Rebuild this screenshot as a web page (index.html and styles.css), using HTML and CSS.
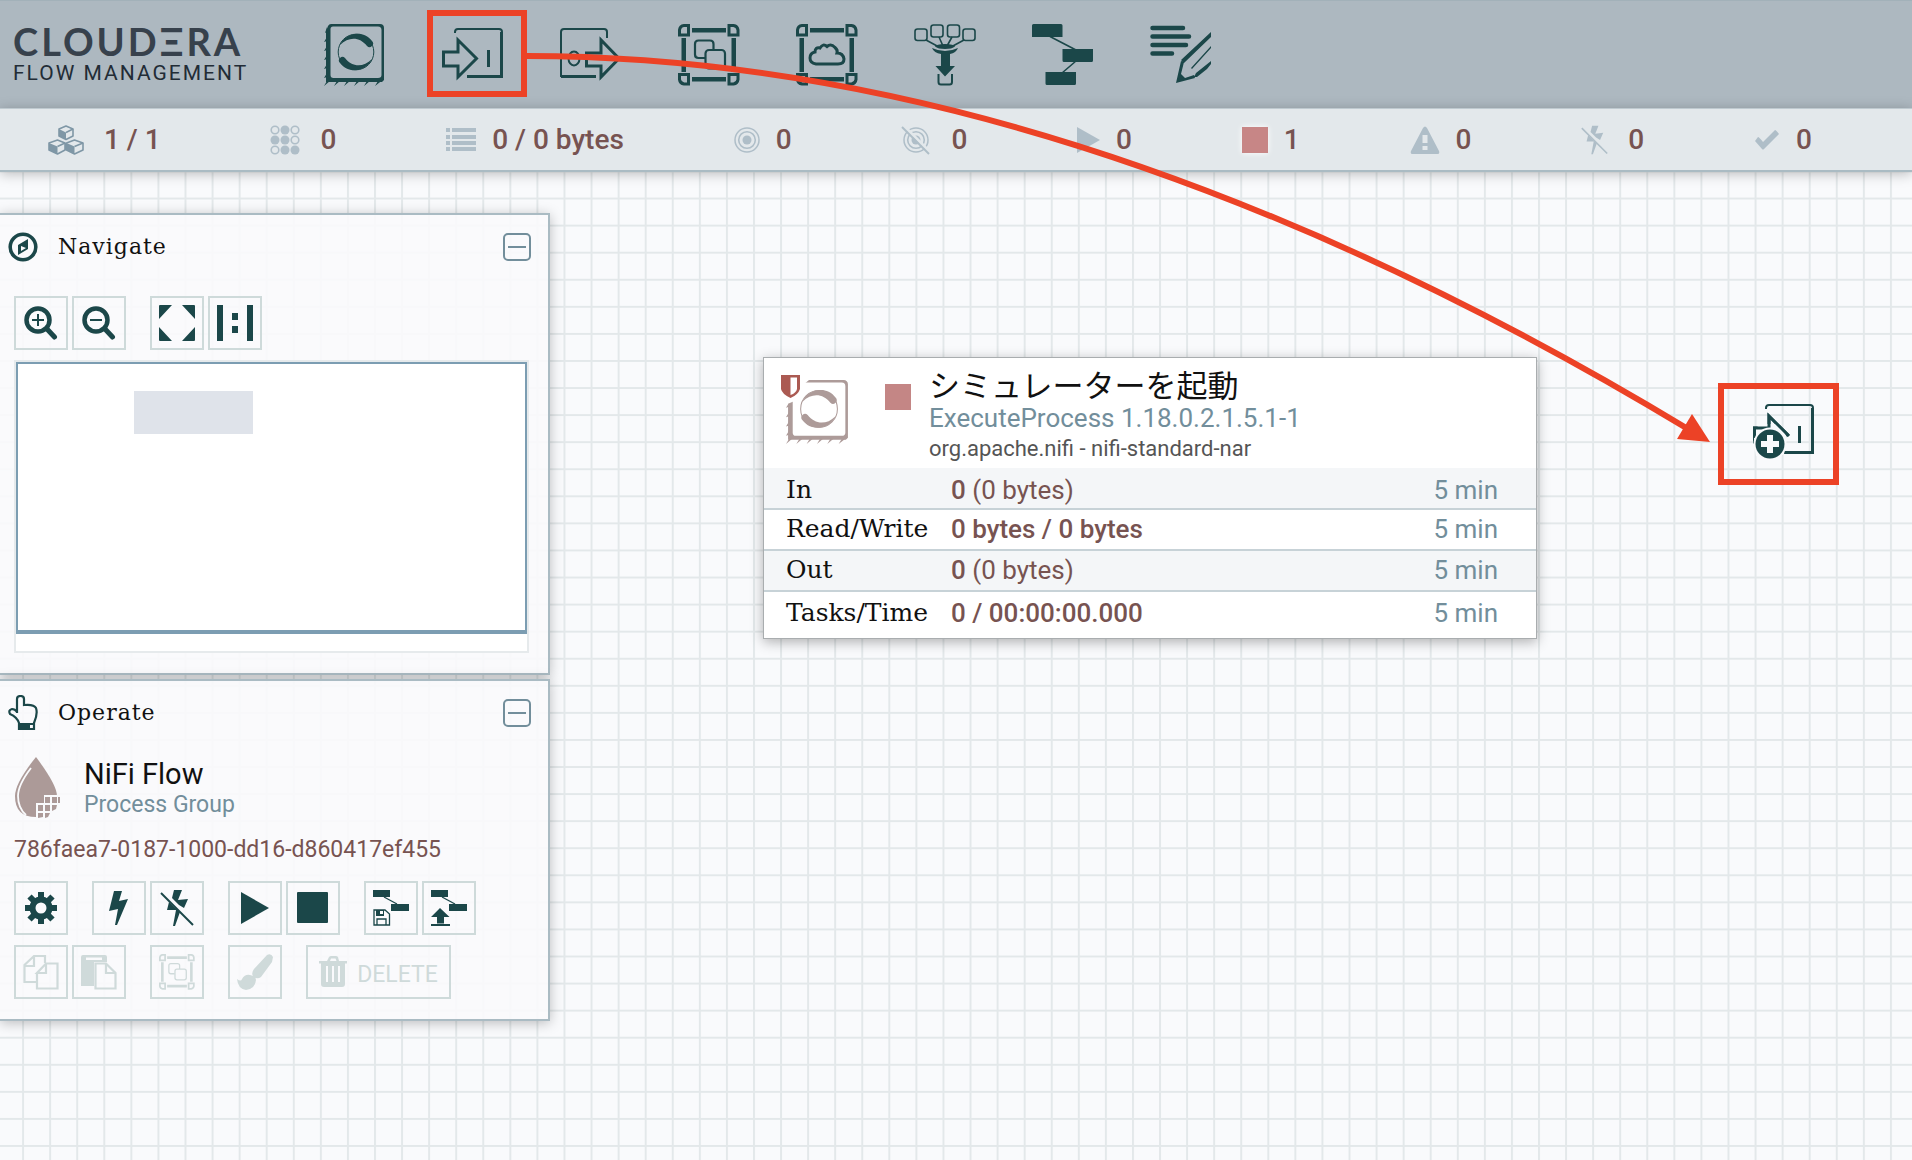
FILE: index.html
```html
<!DOCTYPE html>
<html lang="en">
<head>
<meta charset="utf-8">
<meta name="viewport" content="width=device-width, initial-scale=1">
<title>NiFi Flow</title>
<link rel="stylesheet" href="styles.css">
</head>
<body>
<svg class="defs" aria-hidden="true">
  <symbol id="swirl" viewBox="0 0 40 40">
    <circle cx="20" cy="20" r="17.8" fill="none" stroke="currentColor" stroke-width="1"/>
    <path fill="currentColor" d="M4 13C9 1 27-3 36 9a3.400 3.400 0 0 1-5 5C24 5 13 4 4 13Z"/>
    <path fill="currentColor" d="M36 27C31 39 13 43 4 31a3.400 3.400 0 0 1 5-5C16 35 27 36 36 27Z"/>
  </symbol>
  <symbol id="processor" viewBox="0 0 62 62">
    <path fill="currentColor" fill-rule="evenodd" d="M7 0H56a4 4 0 0 1 4 4V56l-2 2H2V7L4 2Q5 0 7 0ZM9 2.500Q6.500 2.500 6.500 5V51q0 3 3 3H54q3.500 0 3.500-3V6q0-3.500-3.500-3.500Z"/>
    <path fill="currentColor" d="M3 3l-2 6 2-1ZM3 13l-3 5 3-1ZM3 22l-3 5 3-1ZM3 31l-3 5 3-1ZM3 40l-3 5 3-1ZM3 49l-3 5 3-1ZM3 57l-3 5 6-5ZM13 57l-3 5 6-5ZM23 57l-3 5 6-5ZM33 57l-3 5 6-5ZM43 57l-3 5 6-5ZM54 57l-3 5 9-7Z"/>
    <use href="#swirl" x="12" y="8" width="40" height="40"/>
  </symbol>
  <symbol id="port-in" viewBox="0 0 62 62">
    <g fill="none" stroke="currentColor" stroke-width="3">
      <path stroke-width="2" d="M13 9V8Q13 5 16 5H57Q60 5 60 8V10"/>
      <path d="M59.500 8V52.500H25"/>
      <path d="M1.500 28H16V16L34.500 34.500 16 53V42H1.500Z"/>
      <path d="M46.500 26V43"/>
    </g>
  </symbol>
  <symbol id="port-out" viewBox="0 0 62 62">
    <g fill="none" stroke="currentColor" stroke-width="2">
      <path d="M36 52H1V8Q1 5 4 5H44Q47 5 47 8V14"/>
      <path stroke-width="3" d="M36 52.500H1"/>
      <path stroke-width="3" d="M26.500 29H41V16L59 34.500 41 53V42H26.500Z"/>
      <ellipse cx="14" cy="34.500" rx="5.500" ry="7"/>
    </g>
  </symbol>
  <symbol id="frame" viewBox="0 0 62 62">
    <path fill="currentColor" d="M14 4H48V8.500H14ZM14 53H48V57.500H14ZM3.500 14H8V48H3.500ZM53.500 14H58V48H53.500Z"/>
    <path fill="none" stroke="currentColor" stroke-width="3" d="M10.500 1.500V11H1.500V6Q2 2 6 1.500ZM51 1.500V11H60V6Q59.500 2 55.500 1.500ZM10.500 60V50.500H1.500V55.500Q2 59.500 6 60ZM51 60V50.500H60V55.500Q59.500 59.500 55.500 60Z"/>
  </symbol>
  <symbol id="group" viewBox="0 0 62 62">
    <use href="#frame" width="62" height="62"/>
    <g fill="none" stroke="currentColor" stroke-width="2.200">
      <path d="M27 34H20.500Q17 34 17 30.500V20Q17 16.500 20.500 16.500H32Q35.500 16.500 35.500 20V26"/>
      <rect x="27.500" y="26" width="19.500" height="18.500" rx="3.500"/>
    </g>
  </symbol>
  <symbol id="blocks" viewBox="0 0 62 62">
    <path fill="currentColor" d="M0 1.500Q0 0 1.500 0H29Q30.500 0 30.500 1.500V13H0ZM30.500 25H61V36.500Q61 38 59.500 38H32Q30.500 38 30.500 36.500ZM13.500 48H44V59.500Q44 61 42.500 61H15Q13.500 61 13.500 59.500Z"/>
    <path stroke="currentColor" stroke-width="1.600" d="M18 12.500 44 26M44 37 30 49"/>
  </symbol>
  <symbol id="target" viewBox="0 0 26 28">
    <circle cx="13" cy="14" r="12" fill="none" stroke="currentColor" stroke-width="1.500"/>
    <circle cx="13" cy="14" r="8.300" fill="none" stroke="currentColor" stroke-width="1.600"/>
    <circle cx="13" cy="14" r="4.500" fill="currentColor"/>
  </symbol>
  <symbol id="bolt-off" viewBox="0 0 34 36">
    <path fill="currentColor" d="M14 0H22L18 10 28 9 24 18 19 15 12 8ZM9 12L14 17 20 22 15 36H13L16 20 7 20Z"/>
    <path stroke="currentColor" stroke-width="2" d="M1 3 33 35"/>
  </symbol>
</svg>

<header class="toolbar">
  <div class="brand" role="img" aria-label="Cloudera Flow Management">
    <div class="brand-name">CLOUDΞRA</div>
    <div class="brand-product">FLOW MANAGEMENT</div>
  </div>
  <nav class="components" aria-label="Components">
    <button aria-label="Processor"><svg><use href="#processor"/></svg></button>
    <button aria-label="Input port"><svg><use href="#port-in"/></svg></button>
    <button aria-label="Output port"><svg><use href="#port-out"/></svg></button>
    <button aria-label="Process group"><svg><use href="#group"/></svg></button>
    <button aria-label="Remote process group"><svg viewBox="0 0 62 62"><use href="#frame"/><path fill="none" stroke="currentColor" stroke-width="3" d="M20 40Q14 39 14 34 14 29 19 28 19 23 24 24 27 19 31 22.500 35 19 39 23.500 42 26 41 29 47 29 48 35 48 40 42 40Z"/></svg></button>
    <button aria-label="Funnel"><svg viewBox="0 0 62 62"><g fill="none" stroke="currentColor" stroke-width="1.600"><rect x="1" y="5" width="12" height="11.500" rx="2.500"/><rect x="17" y="1" width="12" height="12" rx="2.500"/><rect x="33.500" y="1" width="12" height="12" rx="2.500"/><rect x="49" y="5" width="12" height="11.500" rx="2.500"/><path d="M12 16 25 23M25 13 29 22M38 13 33 22M50 16 37 23"/><path stroke-width="2" d="M24.500 50V58Q24.500 60.500 27 60.500H35.500Q38 60.500 38 58V50"/></g><path fill="currentColor" d="M31 20Q40 20 41 22.500 38 25 31 25 24 25 21 22.500 22 20 31 20ZM18 24Q31 30 44 24 42 29 36 30V42H41L31 52.500 21.500 42H27V30Q20 29 18 24Z"/></svg></button>
    <button aria-label="Template"><svg><use href="#blocks"/></svg></button>
    <button aria-label="Label"><svg viewBox="0 0 62 62"><path stroke="currentColor" stroke-width="4.500" stroke-linecap="round" d="M2.500 4H33M2.500 12.500H39M2.500 21H36M2.500 29.500H22"/><path fill="currentColor" d="M31 36 61 8V13L34 39ZM41 44 61 22V24L42 45ZM44 53 46 49 61 37V40L57 45 47 53ZM26 59 31 37 34 38 31 50 35 54 44 51 45 54Z"/></svg></button>
  </nav>
</header>

<section class="status" aria-label="Flow status">
  <div class="stat wide"><svg class="strong" width="36" height="30" viewBox="0 0 36 30"><g fill="#e3e8eb" stroke="currentColor" stroke-width="1.600" stroke-linejoin="round"><path d="M18 1 25 4V11L18 14.500 11 11V4ZM9.500 15 17 18V25L9.500 29 1 25V18ZM26.500 15 35 18V25L26.500 29 18.500 25V18Z"/></g><path fill="currentColor" d="M11 4 18 7.500V14.500L11 11ZM1 18 9.500 21.500V29L1 25ZM18.500 18 26.500 21.500V29L18.500 25Z"/><path stroke="currentColor" stroke-width="1.500" fill="none" d="M18 7.500 25 4M9.500 21.500 17 18M26.500 21.500 35 18"/></svg><span>1 / 1</span></div>
  <div class="stat wide"><svg width="30" height="30" viewBox="0 0 30 30"><g fill="none" stroke="currentColor" stroke-width="1.600"><circle cx="5" cy="5" r="3.800"/><circle cx="25" cy="5" r="3.800"/><circle cx="25" cy="15" r="3.800"/><circle cx="5" cy="25" r="3.800"/></g><g fill="currentColor"><circle cx="15" cy="5" r="4.500"/><circle cx="5" cy="15" r="4.500"/><circle cx="15" cy="15" r="4.500"/><circle cx="15" cy="25" r="4.500"/><circle cx="25" cy="25" r="4.500"/></g></svg><span>0</span></div>
  <div class="stat"><svg width="30" height="30" viewBox="0 0 30 30"><path fill="currentColor" d="M0 3H4V7H0ZM6 3H30V7H6ZM0 10H4V14H0ZM6 10H30V14H6ZM0 16H4V20H0ZM6 16H30V20H6ZM0 22H4V26H0ZM6 22H30V26H6Z"/></svg><span>0 / 0 bytes</span></div>
  <div class="stat"><svg width="26" height="28"><use href="#target"/></svg><span>0</span></div>
  <div class="stat wide"><svg width="30" height="30" viewBox="0 0 30 30"><use href="#target" x="2" y="1" width="26" height="28"/><path stroke="#e3e8eb" stroke-width="3" d="M3 1 29 27"/><path stroke="currentColor" stroke-width="2" d="M1 2 28 29"/></svg><span>0</span></div>
  <div class="stat"><svg width="23" height="26" viewBox="0 0 23 26"><path fill="currentColor" d="M0 0 23 13 0 26Z"/></svg><span>0</span></div>
  <div class="stat"><i class="stopped"></i><span>1</span></div>
  <div class="stat"><svg width="30" height="28" viewBox="0 0 30 28"><path fill="currentColor" fill-rule="evenodd" d="M13 2Q15-1 17 2L29 25Q30 28 27.500 28H2.500Q0 28 1 25ZM12.500 9V17H17.500V9ZM12.500 20V24H17.500V20Z"/></svg><span>0</span></div>
  <div class="stat wide"><svg width="27" height="30"><use href="#bolt-off"/></svg><span>0</span></div>
  <div class="stat"><svg width="26" height="22" viewBox="0 0 26 22"><path fill="currentColor" d="M1 12 4 8Q5 8 9 13L21 1Q22 1 25 5L10 20Q9 21 8 20Z"/></svg><span>0</span></div>
</section>

<main class="canvas">
  <svg class="grid" aria-hidden="true">
    <defs><pattern id="cell" x="22.100" y="-1.500" width="27.070" height="27.070" patternUnits="userSpaceOnUse"><path fill="#e3e8ea" d="M0 0H27.070V2H2V27.070H0Z"/></pattern></defs>
    <rect width="100%" height="100%" fill="url(#cell)"/>
  </svg>

  <aside class="panels">
    <section class="panel navigate">
      <header class="panel-head">
        <svg width="30" height="30" viewBox="0 0 30 30"><circle cx="15" cy="15" r="12.800" fill="none" stroke="currentColor" stroke-width="3.600"/><path fill="currentColor" fill-rule="evenodd" d="M10 13 20 7V17L10 23ZM13 14V19L18 16Z"/></svg>
        <h2>Navigate</h2>
        <button class="collapse" aria-label="Collapse Navigate"></button>
      </header>
      <div class="tools">
        <div class="set">
          <button aria-label="Zoom in"><svg width="34" height="34" viewBox="0 0 34 34"><circle cx="14" cy="14" r="11.500" fill="none" stroke="currentColor" stroke-width="4.500"/><path stroke="currentColor" stroke-width="5" stroke-linecap="round" d="M23 23 30.500 31"/><path stroke="currentColor" stroke-width="2" d="M8 14H20M14 8V20"/></svg></button>
          <button aria-label="Zoom out"><svg width="34" height="34" viewBox="0 0 34 34"><circle cx="14" cy="14" r="11.500" fill="none" stroke="currentColor" stroke-width="4.500"/><path stroke="currentColor" stroke-width="5" stroke-linecap="round" d="M23 23 30.500 31"/><path stroke="currentColor" stroke-width="2" d="M8 14H20"/></svg></button>
        </div>
        <div class="set">
          <button aria-label="Fit"><svg width="36" height="36" viewBox="0 0 36 36"><path fill="currentColor" d="M0 1Q0 0 1 0H13L0 14ZM23 0H35Q36 0 36 1V14ZM0 22 13 36H1Q0 36 0 35ZM36 22V35Q36 36 35 36H23Z"/></svg></button>
          <button aria-label="Actual size"><svg width="36" height="36" viewBox="0 0 36 36"><path fill="currentColor" d="M0 0H6V36H0ZM30 0H36V36H30ZM15 8H21V15H15ZM15 21H21V28H15Z"/></svg></button>
        </div>
      </div>
      <div class="birdseye"><div class="viewport"><div class="mini"></div></div></div>
    </section>

    <section class="panel operate">
      <header class="panel-head">
        <svg width="30" height="36" viewBox="0 0 30 36"><path fill="none" stroke="currentColor" stroke-width="2.200" d="M9 18V4Q9 1 12.500 1 16 1 16 4V10Q26 9 28 13 30 19 26 28V34H11V28Q9 22 2 19 0 15 4 14 7 14 9 17"/><path fill="currentColor" fill-rule="evenodd" d="M10 28H27V35H10ZM22 30V33H25V30Z"/></svg>
        <h2>Operate</h2>
        <button class="collapse" aria-label="Collapse Operate"></button>
      </header>
      <div class="context">
        <svg width="46" height="62" viewBox="0 0 46 62"><path fill="currentColor" d="M22 0Q43 28 43 39 42 60 22 60 1 60 1 39 1 26 22 0Z"/><path fill="none" stroke="#f9fafc" stroke-width="1.800" d="M17 11Q4 28 4 39 4 51 12 58"/><path fill="#f9fafc" d="M30 38H46V62H22V46H30Z"/><path fill="currentColor" d="M31 40H36V46H31ZM38 40H43V46H38ZM24 48H29V54H24ZM31 48H36V54H31ZM38 48H43L42 52 38 54ZM24 56H29V60L24 61ZM31 56H36L34 60 31 61ZM44 40H46V46H44Z"/></svg>
        <div>
          <div class="context-name">NiFi Flow</div>
          <div class="context-type">Process Group</div>
        </div>
      </div>
      <div class="uuid">786faea7-0187-1000-dd16-d860417ef455</div>
      <div class="tools">
        <div class="set">
          <button aria-label="Configuration"><svg width="32" height="32" viewBox="0 0 32 32"><circle cx="16" cy="16" r="8.500" fill="none" stroke="currentColor" stroke-width="6"/><path stroke="currentColor" stroke-width="6" d="M16 0V7M16 25V32M0 16H7M25 16H32M4.500 4.500 9 9M23 23 27.500 27.500M4.500 27.500 9 23M23 9 27.500 4.500"/></svg></button>
        </div>
        <div class="set">
          <button aria-label="Enable"><svg width="20" height="34" viewBox="0 0 20 34"><path fill="currentColor" d="M5 0H13L10 10 19 8 8 34H6L9 18 0 20Z"/></svg></button>
          <button aria-label="Disable"><svg width="34" height="36"><use href="#bolt-off"/></svg></button>
        </div>
        <div class="set">
          <button aria-label="Start"><svg width="28" height="32" viewBox="0 0 28 32"><path fill="currentColor" d="M0 0 28 16 0 32Z"/></svg></button>
          <button aria-label="Stop"><svg width="32" height="32" viewBox="0 0 32 32"><rect width="31" height="31" rx="1" fill="currentColor"/></svg></button>
        </div>
        <div class="set">
          <button aria-label="Create template"><svg width="36" height="36" viewBox="0 0 36 36"><path fill="currentColor" d="M0 0H17V7H0ZM18 14H36V21H18Z"/><path fill="none" stroke="currentColor" stroke-width="1.300" d="M11 7 24 14M1 20H12L16.500 24V35H1ZM4 35V29H13V35"/><path fill="currentColor" fill-rule="evenodd" d="M3 20H11V26H3ZM7 21V24H10V21Z"/></svg></button>
          <button aria-label="Upload template"><svg width="36" height="36" viewBox="0 0 36 36"><path fill="currentColor" d="M0 0H17V7H0ZM18 14H36V21H18ZM9 18 18.500 27H13V33.500H6V27H0ZM0 34H19V36H0Z"/><path stroke="currentColor" stroke-width="1.300" d="M11 7 24 14"/></svg></button>
        </div>
      </div>
      <div class="tools">
        <div class="set">
          <button disabled aria-label="Copy"><svg width="36" height="36" viewBox="0 0 36 36"><g fill="none" stroke="currentColor" stroke-width="2.200"><path d="M13 28H1.500V11L11 2H22V9M11 2V12H2M14 20V34.500H34.500V9.500H23L14 19H23V10"/></g></svg></button>
          <button disabled aria-label="Paste"><svg width="36" height="36" viewBox="0 0 36 36"><path fill="currentColor" fill-rule="evenodd" d="M0 3Q0 1 2 1H24Q26 1 26 3V8H13V32H0ZM5 3.500V6H21V3.500Z"/><path fill="none" stroke="currentColor" stroke-width="2.200" d="M14.500 9.500H25L34.500 19V34.500H14.500ZM25 10V19H34"/></svg></button>
        </div>
        <div class="set">
          <button disabled aria-label="Group"><svg width="36" height="36"><use href="#group"/></svg></button>
        </div>
        <div class="set">
          <button disabled aria-label="Change color"><svg width="36" height="36" viewBox="0 0 36 36"><path fill="currentColor" d="M30 1Q34-1 36 3L35 8 24 23Q20 26 16 22 14 19 17 15ZM13 21Q19 22 19 26 18 35 9 36 1 35 0 25 4 28 5 25 8 20 13 21Z"/></svg></button>
        </div>
        <div class="set">
          <button disabled class="delete"><svg width="28" height="32" viewBox="0 0 28 32"><path fill="currentColor" fill-rule="evenodd" d="M0 5H8L10 1Q11 0 12 0H17Q18 0 19 1L20 5H28V7.500H26V28Q26 31 23 31H5Q2 31 2 28V7.500H0ZM11 5H17.500L16.500 2.500H12ZM7 10V26H9V10ZM13 10V26H15V10ZM19 10V26H21V10Z"/></svg><span>DELETE</span></button>
        </div>
      </div>
    </section>
  </aside>

  <article class="node">
    <header class="node-head">
      <svg class="node-icon" viewBox="0 0 70 70"><use href="#processor" x="5" y="4" width="64" height="66"/><path fill="#fff" d="M0 0H28V5Q20 10 16 25L4 30H0Z"/><path fill="#ab5a52" d="M0 0H19V14Q17 20 9.500 23 1 19 0 14Z"/><path fill="#fff" d="M9.500 2.500H16V14Q15 18 9.500 20Z"/></svg>
      <i class="node-state"></i>
      <div>
        <h3>シミュレーターを起動</h3>
        <div class="node-type">ExecuteProcess 1.18.0.2.1.5.1-1</div>
        <div class="node-bundle">org.apache.nifi - nifi-standard-nar</div>
      </div>
    </header>
    <table>
      <tr><th scope="row">In</th><td><b>0</b> (0 bytes)</td><td class="window">5 min</td></tr>
      <tr><th scope="row">Read/Write</th><td><b>0 bytes / 0 bytes</b></td><td class="window">5 min</td></tr>
      <tr><th scope="row">Out</th><td><b>0</b> (0 bytes)</td><td class="window">5 min</td></tr>
      <tr><th scope="row">Tasks/Time</th><td><b>0 / 00:00:00.000</b></td><td class="window">5 min</td></tr>
    </table>
  </article>

  <svg class="dragged" viewBox="0 0 62 62" role="img" aria-label="Input port"><use href="#port-in"/><path fill="#f9fafc" d="M0 30 8 24 26 24 34 37 31 54 18 61 3 56Z"/><path fill="none" stroke="currentColor" stroke-width="3" d="M1.500 38V28H16V16L36 36"/><circle cx="17" cy="44" r="16.500" fill="#f9fafc"/><circle cx="17" cy="44" r="14.500" fill="currentColor"/><path stroke="#f9fafc" stroke-width="6" d="M8 44H26M17 35V53"/></svg>
</main>

<svg class="notes" aria-hidden="true">
  <g fill="none" stroke="#ec4226" stroke-width="6">
    <rect x="430" y="13" width="94" height="81"/>
    <rect x="1721" y="386" width="115" height="96"/>
    <path d="M527 56Q1070 56 1688 429"/>
  </g>
  <path fill="#ec4226" d="M1692 414 1710 442 1677 439Z"/>
</svg>
</body>
</html>
```
FILE: styles.css
```css
* { box-sizing: border-box; }

body {
  position: relative;
  display: flex;
  flex-direction: column;
  min-height: 100vh;
  margin: 0;
  overflow-x: hidden;
  background: #f9fafc;
  color: #1b4749;
  font-family: Roboto, "Noto Sans CJK JP", sans-serif;
}

h2, h3 { margin: 0; font-weight: 400; }

button {
  padding: 0;
  border: 0;
  background: none;
  color: inherit;
  font: inherit;
}

svg { display: block; flex: none; }

.defs { position: absolute; width: 0; height: 0; }

/* Top toolbar */
.toolbar {
  display: flex;
  align-items: center;
  height: 108px;
  border-top: 1px solid #a2b1b9;
  background: #adb8c0;
}

.brand { width: 296px; padding: 0 0 4px 13px; white-space: nowrap; }

.brand-name {
  color: #37414c;
  font: 700 38px/40px Lato, sans-serif;
  letter-spacing: 3px;
}

.brand-product {
  color: #222c36;
  font-size: 21px;
  line-height: 24px;
  letter-spacing: 2px;
}

.components { display: flex; }

.components button {
  display: flex;
  align-items: center;
  justify-content: center;
  width: 118px;
  height: 105px;
}

.components svg { width: 62px; height: 62px; }

/* Status bar */
.status {
  position: relative;
  z-index: 1;
  display: flex;
  align-items: center;
  justify-content: space-between;
  height: 64px;
  padding: 0 100px 0 48px;
  border-top: 1px solid #bfcad0;
  border-bottom: 2px solid #aabbc3;
  background: #e3e8eb;
  box-shadow: 0 2px 12px rgba(0, 0, 0, 0.25);
  color: #afbec8;
}

.stat { display: flex; align-items: center; gap: 16px; }
.stat.wide { gap: 20px; }
.stat .strong { color: #7f97a6; }

.stat span {
  color: #775351;
  font-size: 28px;
  font-weight: 500;
  line-height: 32px;
}

.stopped {
  width: 26px;
  height: 26px;
  background: #c78686;
  box-shadow: 0 0 6px #fff;
}

/* Canvas */
.canvas {
  position: relative;
  flex: 1;
  padding: 41px 0 80px;
}

.grid { position: absolute; inset: 0; width: 100%; height: 100%; }

.panels {
  position: relative;
  display: flex;
  flex-direction: column;
  gap: 4px;
  width: 550px;
}

.panel {
  border: 2px solid #aabbc3;
  border-left: 0;
  background: rgba(249, 250, 252, 0.9);
  box-shadow: 0 2px 12px rgba(0, 0, 0, 0.25);
  padding: 0 20px 20px 14px;
}

.panel-head {
  display: flex;
  align-items: center;
  height: 64px;
  margin: 0 -3px 0 -6px;
}

.panel-head h2 {
  flex: 1;
  margin-left: 20px;
  color: #111;
  font: 400 22px/28px "DejaVu Serif", serif;
  letter-spacing: 1px;
}

.collapse {
  display: flex;
  align-items: center;
  justify-content: center;
  width: 28px;
  height: 28px;
  border: 2px solid #728e9b;
  border-radius: 5px;
}

.collapse::before { content: ""; width: 18px; height: 2px; background: #728e9b; }

.tools { display: flex; gap: 24px; }
.set { display: flex; gap: 4px; }

.tools button {
  display: flex;
  align-items: center;
  justify-content: center;
  width: 54px;
  height: 54px;
  border: 2px solid #cedada;
}

.tools button:disabled { color: #cfdada; }

.tools .delete {
  gap: 10px;
  width: 145px;
  font-size: 23px;
  line-height: 26px;
}

.delete span { padding-top: 6px; }

.navigate .tools { margin-top: 17px; }

.birdseye {
  margin-top: 10px;
  height: 293px;
  width: 515px;
  border: 2px solid #e6eaec;
  background: #fff;
}

.viewport {
  height: 272px;
  padding: 27px 116px;
  border: 2px solid #7c9db2;
  border-bottom-width: 4px;
}

.mini { width: 119px; height: 43px; background: #dfe3ea; }

.operate .tools + .tools { margin-top: 10px; }

.context {
  display: flex;
  align-items: center;
  gap: 24px;
  margin-top: 12px;
  color: #ac9a98;
}

.context-name { color: #111; font-size: 29px; line-height: 34px; }
.context-type { color: #728e9b; font-size: 23px; line-height: 28px; }

.uuid {
  margin: 18px 0;
  color: #775351;
  font-size: 23px;
  line-height: 26px;
}

/* Processor on the canvas */
.node {
  position: absolute;
  left: 763px;
  top: 185px;
  width: 774px;
  border: 1px solid #a9adaf;
  background: #fff;
  box-shadow: 0 3px 12px rgba(0, 0, 0, 0.3);
}

.node-head {
  display: flex;
  align-items: flex-start;
  height: 110px;
  padding: 8px 0 0 17px;
}

.node-icon { width: 70px; height: 70px; margin-top: 9px; color: #ad9b99; }

.node-state {
  width: 26px;
  height: 26px;
  margin: 18px 18px 0 34px;
  background: #c48685;
}

.node h3 { color: #111; font-size: 31px; line-height: 36px; font-family: "Noto Sans CJK JP", sans-serif; }
.node-type { color: #728e9b; font-size: 26px; line-height: 32px; }
.node-bundle { color: #555; font-size: 22px; line-height: 30px; }

.node table {
  width: 100%;
  border-collapse: collapse;
  color: #775351;
  font-size: 26px;
  line-height: 34px;
}

.node tr { height: 41px; border-bottom: 2px solid #c7d2d7; }
.node tr:last-child { height: 47px; border-bottom: 0; }
.node tr:nth-child(odd) { background: #f4f6f8; }
.node th, .node td { padding: 0 0 2px; text-align: left; }
.node tr:first-child > * { padding: 4px 0 0; }
.node tr:last-child > * { padding-bottom: 4px; }

.node tr > th:first-child {
  width: 187px;
  padding-left: 22px;
  color: #111;
  font: 400 25px/34px "DejaVu Serif", serif;
}

.node b { font-weight: 500; }
.node tr > .window { padding-right: 38px; color: #728e9b; text-align: right; }

.dragged {
  position: absolute;
  left: 1753px;
  top: 228px;
  width: 62px;
  height: 62px;
}

.notes {
  position: absolute;
  inset: 0;
  z-index: 2;
  width: 100%;
  height: 100%;
  pointer-events: none;
}
```
